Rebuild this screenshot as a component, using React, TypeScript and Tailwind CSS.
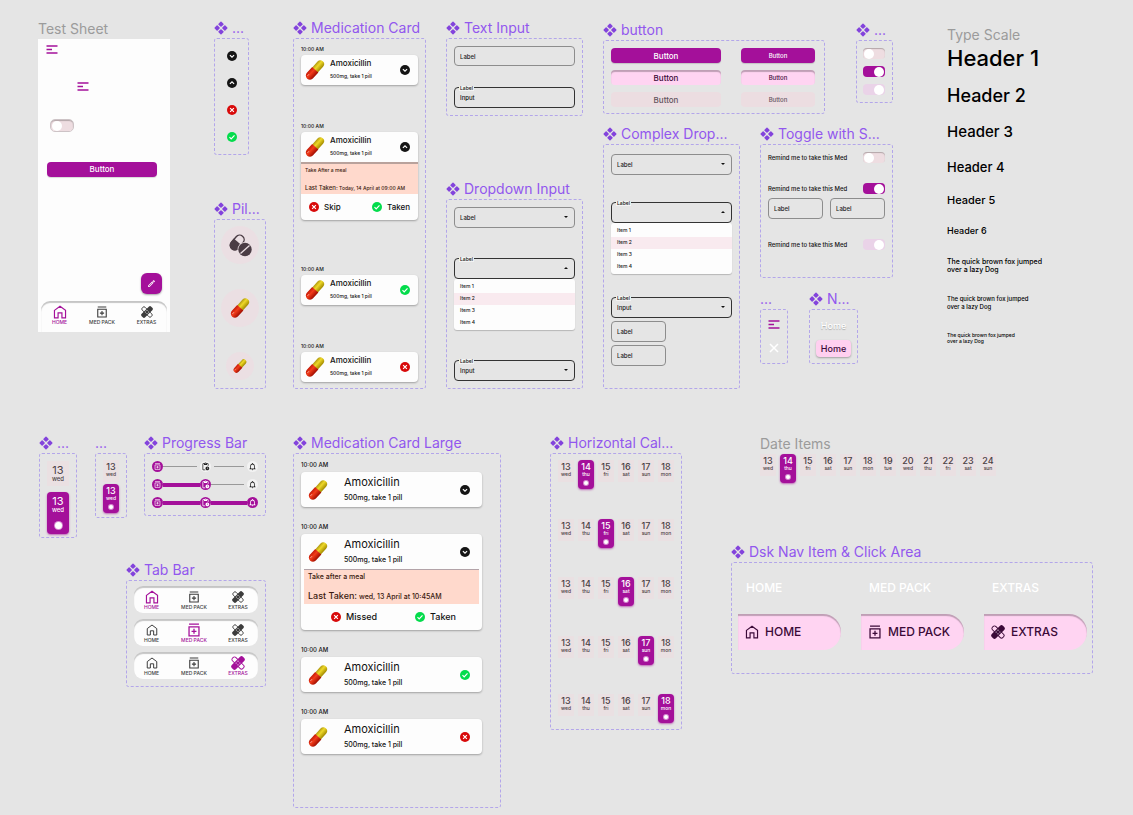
import { useId, type ReactNode } from "react";
import { MdPendingActions, MdNotificationsNone, MdOutlineEdit } from "react-icons/md";

/* ---------- icons ---------- */

function ComponentMark() {
  return (
    <svg viewBox="0 0 24 24" className="size-[14px] shrink-0 fill-[#8343dc]" aria-hidden="true">
      {[
        [12, 5.4],
        [12, 18.6],
        [5.4, 12],
        [18.6, 12],
      ].map(([x, y]) => (
        <rect key={`${x}-${y}`} x={x - 3.6} y={y - 3.6} width="7.2" height="7.2" rx="1.2" transform={`rotate(45 ${x} ${y})`} />
      ))}
    </svg>
  );
}

function HomeIcon({ className }: { className: string }) {
  return (
    <svg viewBox="0 0 24 24" className={className} fill="none" stroke="currentColor" strokeWidth="2" aria-hidden="true">
      <path d="M2.5 9.2 12 2l9.5 7.2V22h-6.2v-8.4H8.7V22H2.5z" />
    </svg>
  );
}

function MedPackIcon({ className }: { className: string }) {
  return (
    <svg viewBox="0 0 24 24" className={className} fill="none" stroke="currentColor" strokeWidth="2.2" aria-hidden="true">
      <path d="M3.5 2h17M3.5 6.500h17V22h-17zM12 10v8.500M7.800 14.200h8.400" />
    </svg>
  );
}

function ExtrasIcon({ className }: { className: string }) {
  return (
    <svg viewBox="0 0 24 24" className={className} aria-hidden="true">
      <g transform="rotate(45 12 12)">
        <rect x="-0.5" y="8" width="25" height="8" rx="3" fill="none" stroke="currentColor" strokeWidth="1.7" />
      </g>
      <g transform="rotate(-45 12 12)">
        <rect x="-1.5" y="7" width="27" height="10" rx="3.5" fill="currentColor" />
      </g>
      <g fill="#fff">
        <circle cx="12" cy="8.8" r="1" />
        <circle cx="12" cy="15.2" r="1" />
        <circle cx="8.8" cy="12" r="1" />
        <circle cx="15.2" cy="12" r="1" />
      </g>
    </svg>
  );
}

function MenuIcon() {
  return (
    <svg viewBox="0 0 12 9" className="h-[9px] w-[12px]" fill="none" stroke="#a4109a" strokeWidth="1.4" aria-hidden="true">
      <path d="M.5 1h11M.5 4.500h5.500M.5 8h11" />
    </svg>
  );
}

type Status = "down" | "up" | "missed" | "taken";

const statusFill: Record<Status, string> = {
  down: "#151515",
  up: "#151515",
  missed: "#d80a0a",
  taken: "#04dc4c",
};

const statusPath: Record<Status, string> = {
  down: "M7 10l5 5 5-5",
  up: "M7 14l5-5 5 5",
  missed: "M7.500 7.500l9 9M16.500 7.500l-9 9",
  taken: "M6 12.500l4 4 8-8.500",
};

function StatusIcon({ status }: { status: Status }) {
  return (
    <svg viewBox="0 0 24 24" className="size-[10px] shrink-0" aria-label={status} role="img">
      <circle cx="12" cy="12" r="12" fill={statusFill[status]} />
      <path d={statusPath[status]} fill="none" stroke="#fff" strokeWidth="2.8" />
    </svg>
  );
}

function PillIcon({ className }: { className: string }) {
  const id = useId();
  return (
    <svg viewBox="0 0 24 24" className={className} aria-hidden="true">
      <defs>
        <linearGradient id={`${id}y`} x1="0" x2="0" y1="0" y2="1">
          <stop offset="0" stopColor="#b09a10" />
          <stop offset=".4" stopColor="#efd928" />
          <stop offset="1" stopColor="#a38b00" />
        </linearGradient>
        <linearGradient id={`${id}r`} x1="0" x2="0" y1="0" y2="1">
          <stop offset="0" stopColor="#c41a08" />
          <stop offset=".4" stopColor="#f23c1a" />
          <stop offset="1" stopColor="#a00d00" />
        </linearGradient>
      </defs>
      <g transform="rotate(-48 12 12)">
        <path d="M12 7.500h9.500a4.500 4.500 0 0 1 0 9H12z" fill={`url(#${id}y)`} />
        <path d="M12.500 7H3a5 5 0 0 0 0 10h9.500z" fill={`url(#${id}r)`} />
        <path d="M1 10h2" stroke="#fff" strokeOpacity=".6" strokeLinecap="round" />
      </g>
    </svg>
  );
}

function PillsGlyph() {
  return (
    <svg viewBox="0 0 24 24" className="size-[24px]" aria-hidden="true">
      <g transform="rotate(40 9 9)">
        <rect x="5" y="1" width="9" height="16.5" rx="4.5" fill="none" stroke="#4a3c44" strokeWidth="1.4" />
        <path d="M4.300 8.500h10.400v4.500a5.200 5.200 0 0 1-10.400 0z" fill="#4a3c44" />
      </g>
      <circle cx="17" cy="16.5" r="7.4" fill="#ebdfe3" />
      <circle cx="17" cy="16.5" r="6.7" fill="#4a3c44" />
      <path d="M12.500 20.500 21.500 12.500" stroke="#ebdfe3" strokeWidth="1.3" />
    </svg>
  );
}

/* ---------- canvas frames ---------- */

function Frame({
  title,
  mark = true,
  place,
  body,
  children,
}: {
  title: string;
  mark?: boolean;
  place: string;
  body: string;
  children: ReactNode;
}) {
  return (
    <section className={`absolute ${place}`}>
      <h2 className="flex h-5 items-center gap-1 text-sm whitespace-nowrap text-[#9257ee]">
        {mark && <ComponentMark />}
        {title}
      </h2>
      <div className={`rounded-[3px] border border-dashed border-[#b3a6ea] ${body}`}>{children}</div>
    </section>
  );
}

/* ---------- form controls ---------- */

const fieldBox = "block h-[21px] w-full rounded-[4px] border bg-transparent px-[5px] text-[6px] font-medium outline-none";

function FloatingLabel() {
  return <span className="absolute -top-px left-[5px] bg-[#f3f3f3] px-px text-[5px] leading-[5px] font-medium">Label</span>;
}

function TextField({ filled }: { filled?: boolean }) {
  if (filled) {
    return (
      <label className="relative block">
        <FloatingLabel />
        <input className={`${fieldBox} border-[#333]`} defaultValue="Input" />
      </label>
    );
  }
  return <input className={`${fieldBox} border-[#8d8d8d] placeholder:text-[#222]`} placeholder="Label" aria-label="Label" />;
}

function Caret({ up }: { up?: boolean }) {
  return (
    <svg viewBox="0 0 8 4" className="pointer-events-none absolute top-[9px] right-[7px] h-[2px] w-[4px]" aria-hidden="true">
      <path d={up ? "M0 4h8L4 0z" : "M0 0h8L4 4z"} fill="#111" />
    </svg>
  );
}

function SelectField({ state }: { state: "empty" | "open" | "filled" }) {
  const text = state === "empty" ? "Label" : state === "filled" ? "Input" : "";
  return (
    <div>
      <label className="relative block">
        {state !== "empty" && <FloatingLabel />}
        <select
          className={`${fieldBox} appearance-none text-[#222] ${state === "empty" ? "border-[#8d8d8d]" : "border-[#333]"}`}
          aria-label="Label"
        >
          <option>{text}</option>
        </select>
        <Caret up={state === "open"} />
      </label>
      {state === "open" && (
        <ul className="rounded-[3px] bg-[#fdfdfd] pt-[2px] pb-px text-[5px] text-[#222] shadow-[0_1px_1px_rgba(0,0,0,0.2)]">
          {["Item 1", "Item 2", "Item 3", "Item 4"].map((item, i) => (
            <li key={item} className={`flex h-[12px] items-center px-[6px] font-medium ${i === 1 ? "bg-[#f9eaef]" : ""}`}>
              {item}
            </li>
          ))}
        </ul>
      )}
    </div>
  );
}

function Toggle({ state }: { state: "off" | "on" | "disabled" }) {
  const track = {
    off: "bg-[#eedde1] shadow-[inset_0_1px_1px_rgba(0,0,0,0.25)]",
    on: "bg-[#a4109a]",
    disabled: "bg-[#ead3e8]",
  }[state];
  return (
    <label className={`relative flex h-[11px] w-[22px] shrink-0 items-center rounded-[4px] px-px ${track} ${state === "off" ? "" : "justify-end"}`}>
      <input
        type="checkbox"
        role="switch"
        aria-label="Reminder"
        className="absolute inset-0 opacity-0"
        defaultChecked={state !== "off"}
        disabled={state === "disabled"}
      />
      <span className="size-[10px] rounded-full bg-white" />
    </label>
  );
}

const buttonKinds = {
  solid: "bg-[#a4109a] text-white shadow-[0_1px_1px_rgba(0,0,0,0.15)]",
  pressed: "bg-[#ffd4f2] text-[#3b0a38] shadow-[inset_0_2px_1px_rgba(0,0,0,0.25)]",
  disabled: "bg-[#ecdde1] text-[#63545d]",
};

function Button({ kind, small }: { kind: keyof typeof buttonKinds; small?: boolean }) {
  return (
    <button
      type="button"
      disabled={kind === "disabled"}
      className={`h-[15px] w-full rounded-[4px] font-medium ${small ? "text-[6px]" : "text-[8px]"} ${buttonKinds[kind]}`}
    >
      Button
    </button>
  );
}

/* ---------- tab bar ---------- */

const tabs = [
  { label: "HOME", Icon: HomeIcon },
  { label: "MED PACK", Icon: MedPackIcon },
  { label: "EXTRAS", Icon: ExtrasIcon },
];

function TabItems({ active }: { active: number }) {
  return (
    <>
      {tabs.map(({ label, Icon }, i) => (
        <a
          key={label}
          href="#"
          className={`flex flex-col items-center text-[5px] leading-[6px] font-medium ${i === active ? "text-[#a4109a]" : "text-[#3c3c3c]"}`}
        >
          <span className="flex h-[14px] items-center">
            <Icon className={i === active ? "size-[14px]" : "size-[12px]"} />
          </span>
          {label}
        </a>
      ))}
    </>
  );
}

function TabBar({ active }: { active: number }) {
  return (
    <nav className="grid h-[27px] grid-cols-[35px_50px_38px] items-center rounded-[9px] bg-[#fdfdfd] shadow-[inset_0_2px_1px_rgba(0,0,0,0.22)]">
      <TabItems active={active} />
    </nav>
  );
}

/* ---------- dates ---------- */

function DayItem({ day, name, active }: { day: number; name: string; active?: boolean }) {
  return (
    <div
      className={`flex w-[16px] flex-col items-center pt-[2px] font-medium ${
        active ? "h-[29px] rounded-[4px] bg-[#a4109a] text-white shadow-[0_1px_2px_rgba(164,16,154,0.6)]" : "h-[22px] bg-[#eae0e2] text-[#4b3f45]"
      }`}
    >
      <span className="text-[9px] leading-[9px]">{day}</span>
      <span className="text-[5px] leading-[6px]">{name}</span>
      {active && <span className="mt-[4px] size-[4px] rounded-full bg-white ring-1 ring-[#d68bd0]" />}
    </div>
  );
}

function LargeDayItem({ active }: { active?: boolean }) {
  return (
    <div
      className={`flex flex-col items-center pt-[4px] ${
        active ? "h-[42px] rounded-[4px] bg-[#a4109a] text-white shadow-[0_1px_2px_rgba(164,16,154,0.6)]" : "h-[25px] bg-[#eae0e2] text-[#4b3f45]"
      }`}
    >
      <span className="text-[11px] leading-[10px]">13</span>
      <span className="text-[6px] leading-[8px] font-medium">wed</span>
      {active && <span className="mt-[8px] size-[7px] rounded-full bg-white ring-1 ring-[#d68bd0]" />}
    </div>
  );
}

const dayNames = ["wed", "thu", "fri", "sat", "sun", "mon", "tue", "wed", "thu", "fri", "sat", "sun"];

function DayStrip({ count, active }: { count: number; active: number }) {
  return (
    <div className="flex h-[29px] items-start gap-1">
      {dayNames.slice(0, count).map((name, i) => (
        <DayItem key={i} day={13 + i} name={name} active={i === active} />
      ))}
    </div>
  );
}

/* ---------- progress ---------- */

function ProgressRow({ done }: { done: number }) {
  const icons = [
    <MedPackIcon key="m" className="size-[7px]" />,
    <MdPendingActions key="p" className="size-[9px]" />,
    <MdNotificationsNone key="n" className="size-[9px]" />,
  ];
  return (
    <div className="flex items-center">
      {icons.map((icon, i) => (
        <div key={i} className={`flex items-center ${i ? "flex-1" : ""}`}>
          {i > 0 && (
            <span className={i < done ? "h-[4px] flex-1 bg-[#a4109a]" : `h-px flex-1 bg-[#999] ${i === done ? "mr-[3px]" : "mx-[3px]"}`} />
          )}
          <span
            className={`flex size-[11px] shrink-0 items-center justify-center rounded-full ${
              i < done ? "bg-[#a4109a] text-white" : "bg-[#f3f3f3] text-[#222]"
            }`}
          >
            {icon}
          </span>
        </div>
      ))}
    </div>
  );
}

/* ---------- medication cards ---------- */

const cardBox = "overflow-hidden rounded-[4px] bg-[#fdfdfd] shadow-[0_1px_2px_rgba(0,0,0,0.3)]";

function MedCard({ status, open }: { status: Status; open?: boolean }) {
  return (
    <article className={open ? "pb-2" : ""}>
      <p className="mb-[2px] text-[5px] leading-[8px] font-medium">10:00 AM</p>
      <div className={cardBox}>
        <div className="flex h-[30px] items-center pr-[8px] pl-[4px]">
          <PillIcon className="size-[20px]" />
          <div className="ml-[5px] flex-1 font-medium">
            <h3 className="text-[8px] leading-[13px]">Amoxicillin</h3>
            <p className="text-[5px] leading-[13px]">500mg, take 1 pill</p>
          </div>
          <StatusIcon status={status} />
        </div>
        {open && (
          <>
            <div className="flex h-[32px] flex-col justify-between border-t-2 border-[#b9a29c] bg-[#ffd9cc] px-[4px] py-[2px] text-[5px] leading-[8px] font-medium text-[#3a1a10]">
              <p>Take After a meal</p>
              <p className="whitespace-nowrap">
                <span className="text-[6px]">Last Taken:</span> Today, 14 April at 09:00 AM
              </p>
            </div>
            <div className="flex h-[26px] items-center justify-between px-[8px] text-[8px] font-medium">
              <button type="button" className="flex items-center gap-[5px]">
                <StatusIcon status="missed" />
                Skip
              </button>
              <button type="button" className="flex items-center gap-[5px]">
                <StatusIcon status="taken" />
                Taken
              </button>
            </div>
          </>
        )}
      </div>
    </article>
  );
}

function MedCardLarge({ status, open }: { status: Status; open?: boolean }) {
  return (
    <article>
      <p className="mb-[3px] text-[6px] leading-[9px] font-medium">10:00 AM</p>
      <div className={cardBox}>
        <div className="flex h-[35px] items-center pr-[12px] pl-[7px]">
          <PillIcon className="size-[20px]" />
          <div className="ml-[16px] flex-1">
            <h3 className="text-[11px] leading-[16px]">Amoxicillin</h3>
            <p className="text-[7px] leading-[16px] font-medium">500mg, take 1 pill</p>
          </div>
          <StatusIcon status={status} />
        </div>
        {open && (
          <>
            <div className="mx-[3px] flex h-[35px] flex-col justify-between border-t border-[#b3a3a8] bg-[#ffd9cc] px-[4px] py-[2px] text-[7px] leading-[10px] font-medium text-[#3a1a10]">
              <p>Take after a meal</p>
              <p className="whitespace-nowrap">
                <span className="text-[9px]">Last Taken:</span> wed, 13 April at 10:45AM
              </p>
            </div>
            <div className="flex h-[26px] items-center justify-center gap-[38px] pl-[4px] text-[9px] font-medium">
              <button type="button" className="flex items-center gap-[5px]">
                <StatusIcon status="missed" />
                Missed
              </button>
              <button type="button" className="flex items-center gap-[5px]">
                <StatusIcon status="taken" />
                Taken
              </button>
            </div>
          </>
        )}
      </div>
    </article>
  );
}

/* ---------- canvas ---------- */

export default function App() {
  return (
    <main className="relative h-screen w-full overflow-auto bg-[#e5e5e5] font-['Inter',sans-serif] text-[#111]">
      <section className="absolute top-[18px] left-[38px] w-[132px]">
        <h2 className="flex h-[21px] items-center text-sm text-[#9b9b9b]">Test Sheet</h2>
        <div className="flex flex-col items-start bg-[#fdfdfd] pt-[6px]">
          <button type="button" className="ml-[8px] block h-[9px]" aria-label="Menu">
            <MenuIcon />
          </button>
          <button type="button" className="mt-[28px] ml-[39px] block h-[9px]" aria-label="Menu">
            <MenuIcon />
          </button>
          <div className="mt-[28px] ml-[12px] rounded-[5px] border border-[#cdc3c6]">
            <Toggle state="off" />
          </div>
          <div className="mt-[22px] ml-[9px] w-[110px]">
            <Button kind="solid" />
          </div>
          <button
            type="button"
            aria-label="Edit"
            className="mt-[95px] mr-[8px] flex size-[21px] items-center justify-center self-end rounded-[6px] bg-[#a4109a] text-white shadow-[0_1px_2px_rgba(0,0,0,0.35)]"
          >
            <MdOutlineEdit className="size-[9px]" />
          </button>
          <nav className="mx-[3px] mt-[7px] grid h-[31px] grid-cols-[37px_48px_1fr] items-start self-stretch rounded-t-[9px] pt-[4px] shadow-[inset_0_2px_1px_rgba(0,0,0,0.22)]">
            <TabItems active={0} />
          </nav>
        </div>
      </section>

      <Frame title="..." place="top-[18px] left-[214px] w-[35px]" body="flex h-[117px] flex-col items-center gap-[17px] pt-[12px]">
        <StatusIcon status="down" />
        <StatusIcon status="up" />
        <StatusIcon status="missed" />
        <StatusIcon status="taken" />
      </Frame>

      <Frame title="Pil..." place="top-[199px] left-[214px] w-[52px]" body="flex h-[170px] flex-col items-center gap-[25px] pt-[6px]">
        <div className="flex size-[38px] items-center justify-center rounded-full bg-[#ebdfe3]">
          <PillsGlyph />
        </div>
        <div className="flex size-[38px] items-center justify-center rounded-full bg-[#ebdfe3]">
          <PillIcon className="size-[20px]" />
        </div>
        <div className="flex size-[28px] items-center justify-center rounded-full bg-[#ebdfe3]">
          <PillIcon className="size-[14px]" />
        </div>
      </Frame>

      <Frame title="Medication Card" place="top-[18px] left-[293px] w-[133px]" body="flex h-[351px] flex-col gap-[37px] px-[7px] pt-[6px]">
        <MedCard status="down" />
        <MedCard status="up" open />
        <MedCard status="taken" />
        <MedCard status="missed" />
      </Frame>

      <Frame title="Text Input" place="top-[18px] left-[446px] w-[137px]" body="flex h-[78px] flex-col gap-[21px] p-[7px]">
        <TextField />
        <TextField filled />
      </Frame>

      <Frame title="Dropdown Input" place="top-[179px] left-[446px] w-[137px]" body="flex h-[190px] flex-col gap-[30px] p-[7px]">
        <SelectField state="empty" />
        <SelectField state="open" />
        <SelectField state="filled" />
      </Frame>

      <Frame title="button" place="top-[20px] left-[603px] w-[222px]" body="grid h-[74px] grid-cols-[110px_74px] content-start gap-x-5 gap-y-[7px] px-[7px] pt-[7px]">
        <Button kind="solid" />
        <Button kind="solid" small />
        <Button kind="pressed" />
        <Button kind="pressed" small />
        <Button kind="disabled" />
        <Button kind="disabled" small />
      </Frame>

      <Frame title="..." place="top-[20px] left-[856px] w-[37px]" body="flex h-[63px] flex-col gap-[7px] px-[6px] pt-[7px]">
        <Toggle state="off" />
        <Toggle state="on" />
        <Toggle state="disabled" />
      </Frame>

      <Frame title="Complex Drop..." place="top-[124px] left-[603px] w-[137px]" body="h-[245px] px-[7px] pt-[9px]">
        <div className="flex flex-col gap-[27px]">
          <SelectField state="empty" />
          <SelectField state="open" />
        </div>
        <div className="mt-[23px] flex flex-col gap-[3px]">
          <SelectField state="filled" />
          <div className="w-[55px]">
            <TextField />
          </div>
          <div className="w-[55px]">
            <TextField />
          </div>
        </div>
      </Frame>

      <Frame title="Toggle with S..." place="top-[124px] left-[760px] w-[133px]" body="flex h-[134px] flex-col gap-5 px-[7px] pt-[7px] text-[6px] font-medium">
        <div className="flex items-center justify-between">
          Remind me to take this Med
          <Toggle state="off" />
        </div>
        <div>
          <div className="flex items-center justify-between">
            Remind me to take this Med
            <Toggle state="on" />
          </div>
          <div className="mt-[4px] grid grid-cols-2 gap-[7px]">
            <TextField />
            <TextField />
          </div>
        </div>
        <div className="flex items-center justify-between">
          Remind me to take this Med
          <Toggle state="disabled" />
        </div>
      </Frame>

      <Frame title="..." mark={false} place="top-[289px] left-[760px] w-[28px]" body="flex h-[55px] flex-col items-center gap-[14px] pt-[10px]">
        <MenuIcon />
        <svg viewBox="0 0 10 10" className="size-[10px]" stroke="#fff" strokeWidth="1.5" aria-hidden="true">
          <path d="M1 1l8 8M9 1l-8 8" />
        </svg>
      </Frame>

      <Frame title="N..." place="top-[289px] left-[809px] w-[49px]" body="flex h-[55px] flex-col gap-[6px] px-[6px] pt-[7px] text-center text-[9px] leading-[17px] font-medium">
        <a href="#" className="text-white [text-shadow:0_1px_1px_rgba(0,0,0,0.25)]">
          Home
        </a>
        <a href="#" className="rounded-[4px] bg-[#ffd0f0] text-[#3b0a38] shadow-[0_1px_2px_rgba(0,0,0,0.3)]">
          Home
        </a>
      </Frame>

      <section className="absolute top-[25px] left-[947px] font-medium whitespace-nowrap text-black">
        <h2 className="flex h-5 items-center text-sm font-normal text-[#9b9b9b]">Type Scale</h2>
        <h1 className="text-[22px] leading-[27px]">Header 1</h1>
        <h2 className="mt-[12px] text-[18px] leading-[24px]">Header 2</h2>
        <h3 className="mt-[14px] text-[15px] leading-[20px]">Header 3</h3>
        <h4 className="mt-[17px] text-[13px] leading-[16px]">Header 4</h4>
        <h5 className="mt-[18px] text-[11px] leading-[14px]">Header 5</h5>
        <h6 className="mt-[18px] text-[9px] leading-[12px]">Header 6</h6>
        <p className="mt-[21px] text-[7px] leading-[8px]">
          The quick brown fox jumped
          <br />
          over a lazy Dog
        </p>
        <p className="mt-[21px] text-[6px] leading-[8px]">
          The quick brown fox jumped
          <br />
          over a lazy Dog
        </p>
        <p className="mt-[21px] text-[5px] leading-[6px]">
          The quick brown fox jumped
          <br />
          over a lazy Dog
        </p>
      </section>

      <Frame title="..." place="top-[433px] left-[39px] w-[38px]" body="flex h-[85px] flex-col gap-[6px] px-[7px] pt-[7px]">
        <LargeDayItem />
        <LargeDayItem active />
      </Frame>

      <Frame title="..." mark={false} place="top-[433px] left-[95px] w-[32px]" body="flex h-[65px] flex-col items-center gap-[2px] pt-[6px]">
        <DayItem day={13} name="wed" />
        <DayItem day={13} name="wed" active />
      </Frame>

      <Frame title="Progress Bar" place="top-[433px] left-[144px] w-[122px]" body="flex h-[63px] flex-col gap-[7px] px-[7px] pt-[7px]">
        <ProgressRow done={1} />
        <ProgressRow done={2} />
        <ProgressRow done={3} />
      </Frame>

      <Frame title="Tab Bar" place="top-[560px] left-[126px] w-[140px]" body="flex h-[107px] flex-col gap-[6px] px-[7px] pt-[5px]">
        <TabBar active={0} />
        <TabBar active={1} />
        <TabBar active={2} />
      </Frame>

      <Frame title="Medication Card Large" place="top-[433px] left-[293px] w-[208px]" body="flex h-[355px] flex-col gap-[15px] pt-[6px] pr-[18px] pl-[7px]">
        <MedCardLarge status="down" />
        <MedCardLarge status="down" open />
        <MedCardLarge status="taken" />
        <MedCardLarge status="missed" />
      </Frame>

      <Frame title="Horizontal Cal..." place="top-[433px] left-[550px] w-[132px]" body="flex h-[277px] flex-col justify-between px-[7px] py-[6px]">
        {[1, 2, 3, 4, 5].map((n) => (
          <DayStrip key={n} count={6} active={n} />
        ))}
      </Frame>

      <section className="absolute top-[433px] left-[760px]">
        <h2 className="flex h-[21px] items-center text-sm text-[#9b9b9b]">Date Items</h2>
        <DayStrip count={12} active={1} />
      </section>

      <Frame title="Dsk Nav Item & Click Area" place="top-[542px] left-[731px] w-[362px]" body="grid h-[112px] grid-cols-[103px_103px_103px] content-start gap-x-5 gap-y-[16px] px-[6px] pt-[15px] text-[12px] font-medium">
        {tabs.map(({ label }) => (
          <a key={label} href="#" className="pl-[8px] leading-[20px] text-white">
            {label}
          </a>
        ))}
        {tabs.map(({ label, Icon }) => (
          <a
            key={label}
            href="#"
            className="flex h-[36px] items-center gap-[6px] rounded-r-[18px] bg-[#ffd4f2] pl-[7px] text-[#3b0a38] shadow-[inset_0_2px_1px_rgba(0,0,0,0.25)]"
          >
            <Icon className="size-[14px]" />
            {label}
          </a>
        ))}
      </Frame>
    </main>
  );
}
